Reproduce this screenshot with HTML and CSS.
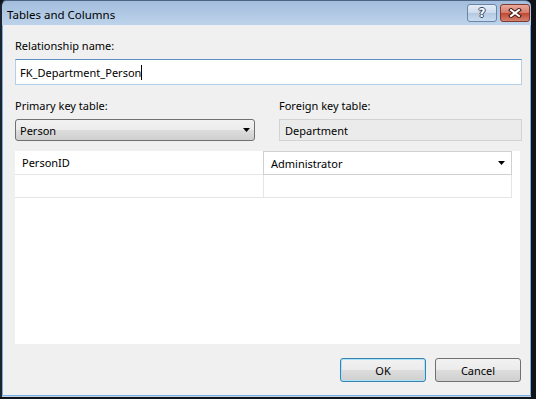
FILE: index.html
```html
<!DOCTYPE html>
<html lang="en">
<head>
    <meta charset="UTF-8">
    <title>Tables and Columns</title>
    <link rel="stylesheet" href="styles.css">
</head>
<body>
    <div class="window">
        <div class="titlebar">
            <span class="title">Tables and Columns</span>
            <div class="caption-buttons">
                <div class="cap-btn help"><span class="help-glyph">?</span></div>
                <div class="cap-btn close">
                    <svg width="14" height="10" viewBox="0 0 14 10">
                        <path d="M3 2 L11 8 M11 2 L3 8" stroke="#3a1712" stroke-width="4" stroke-linecap="square"/>
                        <path d="M3 2 L11 8 M11 2 L3 8" stroke="#ffffff" stroke-width="2" stroke-linecap="square"/>
                    </svg>
                </div>
            </div>
        </div>

        <div class="client">
            <div class="field-label">Relationship name:</div>
            <div class="textbox focused">FK_Department_Person<span class="caret"></span></div>

            <div class="keys">
                <div class="field-label">Primary key table:</div>
                <div class="field-label">Foreign key table:</div>
                <div class="combo">
                    <span>Person</span>
                    <svg class="arrow" width="7" height="4" viewBox="0 0 7 4"><polygon points="0,0 7,0 3.5,4" fill="#000"/></svg>
                </div>
                <div class="readonly">Department</div>
            </div>

            <div class="grid">
                <div class="grid-row first">
                    <div class="cell">PersonID</div>
                    <div class="cell editor">
                        <span>Administrator</span>
                        <svg class="arrow" width="7" height="4" viewBox="0 0 7 4"><polygon points="0,0 7,0 3.5,4" fill="#000"/></svg>
                    </div>
                </div>
                <div class="grid-row">
                    <div class="cell"></div>
                    <div class="cell second"></div>
                </div>
            </div>

            <div class="buttons">
                <button class="btn default">OK</button>
                <button class="btn">Cancel</button>
            </div>
        </div>
    </div>
</body>
</html>
```

FILE: styles.css
```css
body {
    margin: 0;
    background-color: #101418;
    font-family: "Noto Sans", sans-serif;
    font-size: 11px;
    color: #000;
}
.window {
    width: 531px;
    height: 397px;
    box-sizing: border-box;
    border-left: 2px solid #1b2531;
    border-top: 1px solid #4d6582;
    border-radius: 6px 6px 0 0;
    background: linear-gradient(#a3bddc, #bdd3eb 24px);
    display: flex;
    flex-direction: column;
}
.titlebar {
    height: 24px;
    flex-shrink: 0;
    display: flex;
    align-items: flex-start;
    justify-content: space-between;
    padding: 0 1px 0 5px;
}
.title {
    padding-top: 6px;
    line-height: 15px;
    font-size: 11.5px;
}
.caption-buttons {
    display: flex;
    gap: 3px;
    margin-top: 3px;
}
.cap-btn {
    width: 30px;
    height: 18px;
    box-sizing: border-box;
    border-radius: 3px;
    display: flex;
    align-items: center;
    justify-content: center;
}
.help {
    border: 1px solid #6b85a6;
    background: linear-gradient(#e4edf7, #cbdaec 50%, #b3c8e1 50%, #c9dbef);
}
.help-glyph {
    font-family: "DejaVu Sans", sans-serif;
    font-weight: bold;
    font-size: 12px;
    line-height: 12px;
    color: #fff;
    text-shadow: 1px 0 #2f4460, -1px 0 #2f4460, 0 1px #2f4460, 0 -1px #2f4460;
}
.close {
    border: 1px solid #7c3a31;
    background: linear-gradient(#eaaa9c, #d57a6a 50%, #c2452f 50%, #d3826f);
}
.client {
    flex: 1;
    margin-bottom: 1px;
    background-color: #f0f0f0;
    border: 1px solid #7aaee0;
    border-top: none;
    padding: 13px 8px 0 12px;
    display: flex;
    flex-direction: column;
}
.field-label {
    line-height: 15px;
}
.textbox {
    margin-top: 6px;
    height: 26px;
    box-sizing: border-box;
    background: #fff;
    border: 1px solid #b5cfe7;
    border-top-color: #5d8fc2;
    padding-left: 4px;
    display: flex;
    align-items: center;
}
.caret {
    display: inline-block;
    width: 1px;
    height: 15px;
    background: #000;
}
.keys {
    margin-top: 13px;
    display: grid;
    grid-template-columns: 240px 1fr;
    column-gap: 24px;
    row-gap: 6px;
}
.combo {
    height: 22px;
    box-sizing: border-box;
    border: 1px solid #707070;
    border-radius: 3px;
    background: linear-gradient(#f2f2f2, #ebebeb 50%, #dddddd 50%, #cfcfcf);
    padding: 0 4px 0 4px;
    display: flex;
    align-items: center;
    justify-content: space-between;
}
.readonly {
    height: 22px;
    box-sizing: border-box;
    border: 1px solid #d3d3d3;
    background: #ebebeb;
    padding-left: 5px;
    display: flex;
    align-items: center;
}
.grid {
    margin-top: 10px;
    margin-right: 2px;
    height: 193px;
    background: #fff;
}
.grid-row {
    display: grid;
    grid-template-columns: 248px 249px;
}
.cell {
    height: 23px;
    box-sizing: border-box;
    border-bottom: 1px solid #e6e6e6;
    padding-left: 7px;
    display: flex;
    align-items: center;
}
.grid-row.first .cell {
    height: 24px;
}
.cell.editor {
    border: 1px solid #d0d0d0;
    padding-right: 6px;
    justify-content: space-between;
}
.cell.second {
    border-left: 1px solid #e6e6e6;
    border-right: 1px solid #e6e6e6;
}
.buttons {
    margin-top: 14px;
    margin-right: 1px;
    display: flex;
    justify-content: flex-end;
    gap: 9px;
}
.btn {
    width: 86px;
    height: 24px;
    box-sizing: border-box;
    border: 1px solid #707070;
    border-radius: 3px;
    background: linear-gradient(#f2f2f2, #ebebeb 50%, #dddddd 50%, #cfcfcf);
    font-family: inherit;
    font-size: 11px;
    color: #000;
    padding: 0;
}
.btn.default {
    border-color: #3c7fb1;
    box-shadow: inset 0 0 0 1px #a8e3f6;
}
```
